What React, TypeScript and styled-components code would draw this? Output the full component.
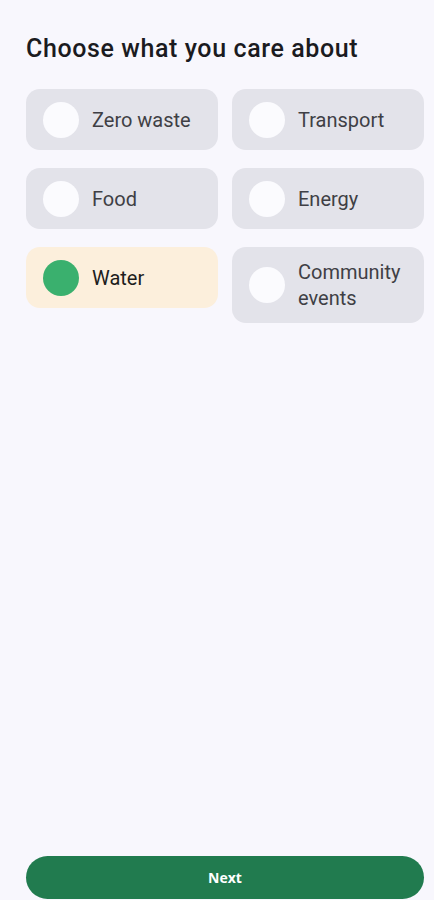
import React, { useState } from "react";
import styled, { createGlobalStyle } from "styled-components";

const Global = createGlobalStyle`
  html, body { margin: 0; padding: 0; background: #f8f7fd; }
  * { box-sizing: border-box; }
`;

const Page = styled.div`
  min-height: 900px;
  height: 900px;
  display: flex;
  flex-direction: column;
  padding: 32px 10px 1px 26px;
  background: #f8f7fd;
  font-family: Roboto, "Noto Sans", sans-serif;
`;

const Title = styled.h1`
  margin: 0 0 23px 0;
  font-size: 25px;
  line-height: 34px;
  font-weight: 500;
  color: #1b1b1f;
  letter-spacing: 0.6px;
`;

const Grid = styled.div`
  display: grid;
  grid-template-columns: 1fr 1fr;
  column-gap: 14px;
  row-gap: 18px;
  align-items: start;
`;

const Card = styled.button<{ $selected: boolean }>`
  display: flex;
  align-items: center;
  gap: 13px;
  min-height: 61px;
  padding: 12px 17px;
  border: none;
  border-radius: 14px;
  background: ${(p) => (p.$selected ? "#fcefdc" : "#e3e3ea")};
  text-align: left;
  cursor: pointer;
  font-family: inherit;
`;

const Dot = styled.span<{ $selected: boolean }>`
  flex: 0 0 36px;
  width: 36px;
  height: 36px;
  border-radius: 50%;
  background: ${(p) => (p.$selected ? "#3ab06e" : "#fbfbfe")};
`;

const Label = styled.span<{ $selected: boolean }>`
  font-size: 20px;
  line-height: 26px;
  color: ${(p) => (p.$selected ? "#1d1d1d" : "#3f3f45")};
`;

const NextButton = styled.button`
  margin-top: auto;
  height: 43px;
  width: 100%;
  border: none;
  border-radius: 22px;
  background: #217b4f;
  color: #ffffff;
  font-family: "Open Sans", "Noto Sans", sans-serif;
  font-weight: 700;
  font-size: 14px;
  cursor: pointer;
`;

const topics = ["Zero waste", "Transport", "Food", "Energy", "Water", "Community events"];

export default function App() {
  const [selected, setSelected] = useState<string[]>(["Water"]);
  const toggle = (t: string) =>
    setSelected((s) => (s.includes(t) ? s.filter((x) => x !== t) : [...s, t]));
  return (
    <>
      <Global />
      <Page>
        <Title>Choose what you care about</Title>
        <Grid>
          {topics.map((t) => {
            const on = selected.includes(t);
            return (
              <Card key={t} $selected={on} onClick={() => toggle(t)}>
                <Dot $selected={on} />
                <Label $selected={on}>{t === "Community events" ? <>Community<br />events</> : t}</Label>
              </Card>
            );
          })}
        </Grid>
        <NextButton>Next</NextButton>
      </Page>
    </>
  );
}
